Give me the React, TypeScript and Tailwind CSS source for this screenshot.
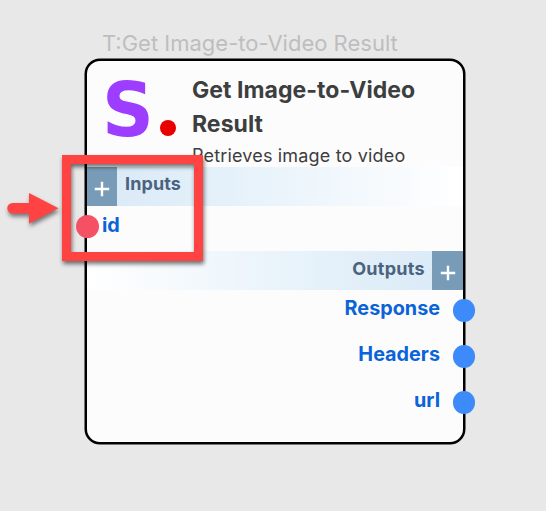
import type { ReactNode } from "react";

function Plus() {
  return (
    <svg width="16" height="16" viewBox="0 0 16 16" className="shrink-0">
      <path d="M8 0.8V15.2M0.8 8H15.2" stroke="#fff" strokeWidth="2.4" fill="none" />
    </svg>
  );
}

function Output({ children }: { children: ReactNode }) {
  return (
    <div className="flex h-[46px] items-start justify-end">
      <span className="mr-[13px] text-[19.8px] leading-[26px] font-bold text-[#0b63d8]">{children}</span>
      <span className="mt-[4px] -mr-[12px] h-[23px] w-[22px] shrink-0 rounded-full bg-[#3d8bfb]" />
    </div>
  );
}

export default function App() {
  return (
    <main className="relative h-[511px] w-[546px] overflow-hidden bg-[#e8e8e8] pl-[85px] font-['Inter',sans-serif]">
      <div className="h-[59px] pt-[28px] pl-[17px] text-[22px] leading-[30px] whitespace-nowrap text-[#bebebe]">
        <span>T:Get Image-to-Video Result</span>
      </div>
      <section className="flex h-[385px] w-[380px] flex-col rounded-[15px] border-2 border-black bg-[#fcfcfc] shadow-[0_0_0_0.5px_#000]">
        <header className="flex h-[106px] shrink-0">
          <div className="flex w-[105px] shrink-0 pl-[15px]">
            <span className="w-[58px] origin-left scale-x-[0.96] pt-[12px] font-['DejaVu_Sans',sans-serif] text-[75px] leading-[75px] font-bold text-[#9c3dff]">S</span>
            <span className="mt-[59px] size-[16px] shrink-0 rounded-full bg-[#e80000]" />
          </div>
          <div className="pt-[12px] whitespace-nowrap text-[#3c3e40]">
            <h1 className="text-[23px] leading-[34px] font-bold tracking-[0.05px]">Get Image-to-Video<br />Result</h1>
            <p className="text-[18px] leading-[30px] tracking-[0.17px]">Retrieves image to video</p>
          </div>
        </header>
        <div className="flex h-[39px] shrink-0 bg-linear-to-r from-[#d8e9f6] via-[#e5f1fa] via-38% to-white">
          <span className="flex w-[30px] items-center justify-center bg-[#789cb8] pt-[5px]"><Plus /></span>
          <span className="pl-[8px] text-[18px] leading-[34px] font-bold tracking-[0.1px] text-[#4a637e]">Inputs</span>
        </div>
        <div className="flex h-[45px] shrink-0 items-start">
          <span className="mt-[9px] -ml-[11px] size-[23px] rounded-full bg-[#f65064]" />
          <span className="ml-[3px] pt-[6px] text-[19.8px] leading-[26px] font-bold text-[#0b63d8]">id</span>
        </div>
        <div className="flex h-[39px] shrink-0 justify-end bg-linear-to-l from-[#d8e9f6] via-[#e5f1fa] via-38% to-white">
          <span className="pr-[7px] text-[18px] leading-[36px] font-bold tracking-[0.3px] text-[#4a637e]">Outputs</span>
          <span className="flex w-[31px] items-center justify-center bg-[#789cb8] pt-[4px] pl-px"><Plus /></span>
        </div>
        <div className="pt-[5px]">
          <Output>Response</Output>
          <Output>Headers</Output>
          <Output>url</Output>
        </div>
      </section>
      <div className="absolute top-[155px] left-[62px] h-[106px] w-[141px] border-9 border-[#ff4343] drop-shadow-[1px_3px_2px_rgba(0,0,0,0.55)]" />
      <svg className="absolute top-[188px] left-0 drop-shadow-[1px_3px_2px_rgba(0,0,0,0.5)]" width="62" height="42" viewBox="0 0 62 42">
        <path d="M12.5 15H29V5L58.5 20.2L29 35.5V25.5H12.5A5.25 5.25 0 0 1 12.5 15Z" fill="#ff4343" />
      </svg>
    </main>
  );
}
